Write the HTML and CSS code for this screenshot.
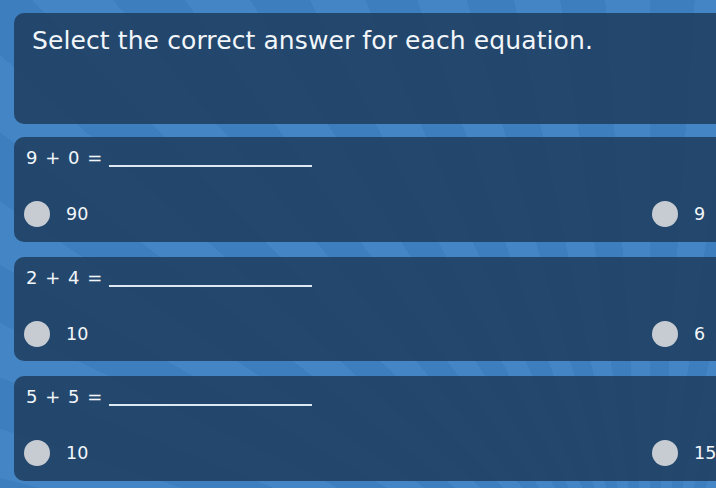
FILE: index.html
```html
<!DOCTYPE html>
<html lang="en">
<head>
<meta charset="utf-8">
<title>Equations</title>
<link rel="stylesheet" href="styles.css">
</head>
<body>
<main class="quiz">
  <header class="card prompt">
    <h1 class="prompt-text">Select the correct answer for each equation.</h1>
  </header>

  <section class="card question">
    <p class="equation">9 + 0 = <span class="blank"></span></p>
    <div class="options">
      <label class="option"><span class="radio"></span><span class="value">90</span></label>
      <label class="option"><span class="radio"></span><span class="value">9</span></label>
    </div>
  </section>

  <section class="card question">
    <p class="equation">2 + 4 = <span class="blank"></span></p>
    <div class="options">
      <label class="option"><span class="radio"></span><span class="value">10</span></label>
      <label class="option"><span class="radio"></span><span class="value">6</span></label>
    </div>
  </section>

  <section class="card question">
    <p class="equation">5 + 5 = <span class="blank"></span></p>
    <div class="options">
      <label class="option"><span class="radio"></span><span class="value">10</span></label>
      <label class="option"><span class="radio"></span><span class="value">15</span></label>
    </div>
  </section>
</main>
</body>
</html>
```

FILE: styles.css
```css
html, body {
  margin: 0;
  height: 100%;
  overflow: hidden;
}

body {
  font-family: "DejaVu Sans", Verdana, sans-serif;
  color: #f2f6fa;
  background-color: #3d80c0;
  background-image: repeating-conic-gradient(
    from 0deg at 650px 640px,
    #3c7ebe 0deg 4deg,
    #4486c5 4deg 8deg
  );
}

.quiz {
  display: flex;
  flex-direction: column;
  gap: 13px;
  padding: 13px 0 0 14px;
  width: 760px;
}

.card {
  background: rgba(32, 62, 94, 0.86);
  border-radius: 10px;
  box-sizing: border-box;
}

.prompt {
  height: 111px;
  padding: 15px 18px 0;
}

.prompt-text {
  margin: 0;
  font-size: 25px;
  font-weight: normal;
  line-height: 1;
  letter-spacing: 0.1px;
}

.question {
  height: 104.5px;
  padding: 10px 10px 0;
}

.question + .question {
  margin-top: 2px;
}

.equation {
  margin: 0;
  font-size: 18px;
  line-height: 22px;
  display: flex;
  align-items: flex-end;
  padding-left: 2px;
  word-spacing: 2px;
}

.blank {
  display: inline-block;
  width: 203px;
  height: 2px;
  background: #dce8f2;
  margin: 0 0 2px 7px;
}

.options {
  display: grid;
  grid-template-columns: 628px 1fr;
  margin-top: 32px;
}

.option {
  display: flex;
  align-items: center;
  gap: 16px;
  font-size: 17.5px;
}

.radio {
  width: 26px;
  height: 26px;
  border-radius: 50%;
  background: #c7ccd3;
  flex: none;
}
```
